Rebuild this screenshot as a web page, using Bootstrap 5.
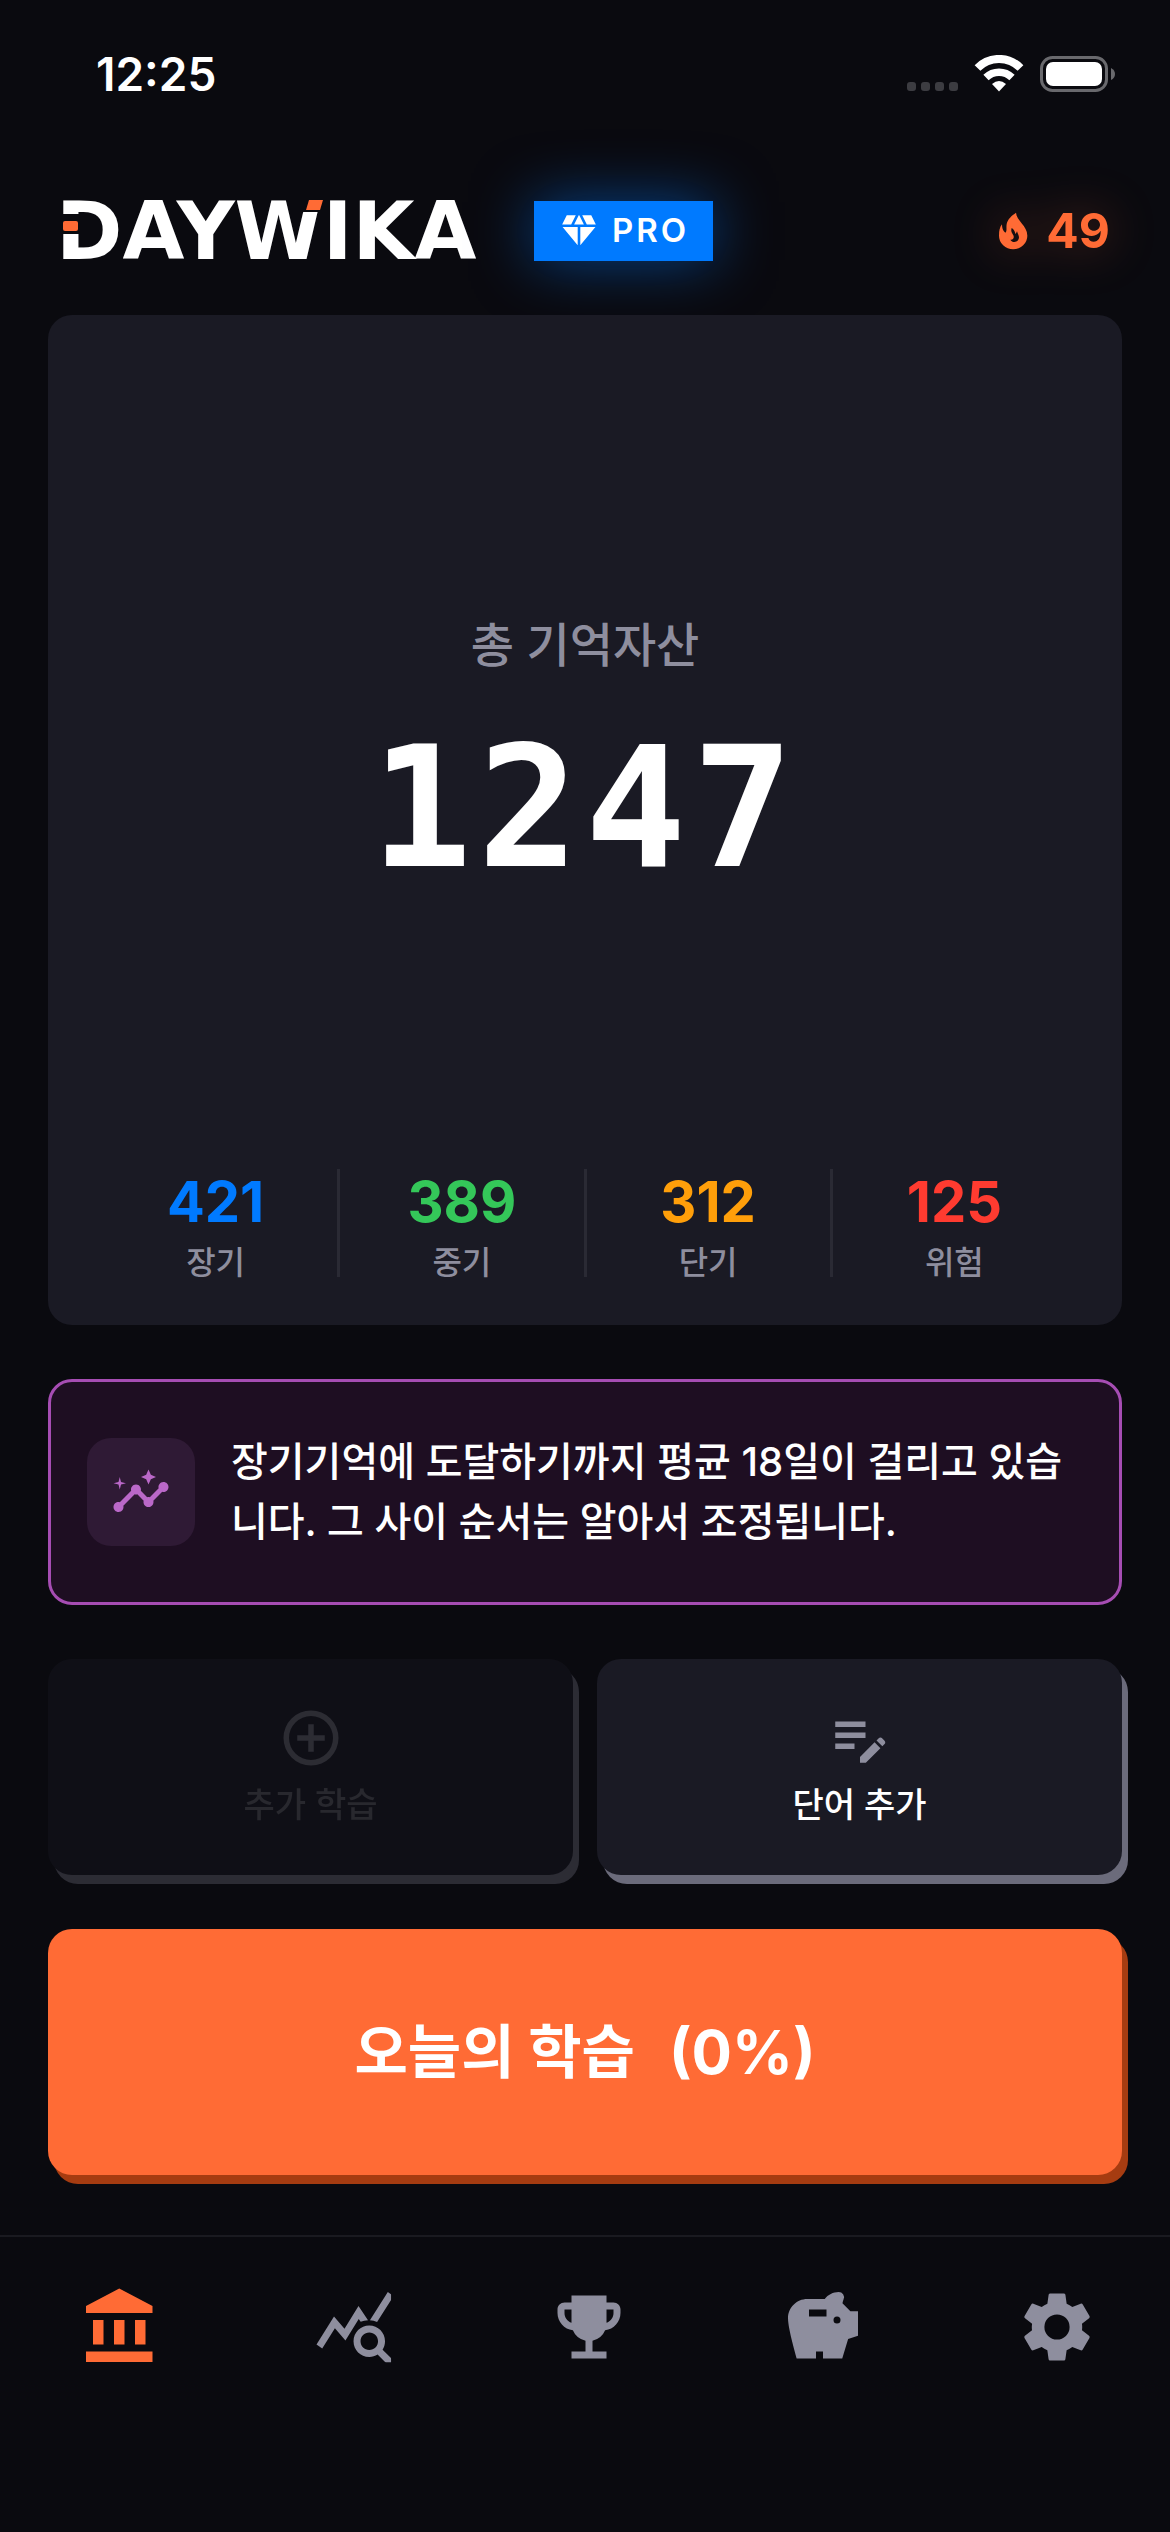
<!DOCTYPE html>
<html lang="ko">
<head>
<meta charset="utf-8">
<meta name="viewport" content="width=device-width, initial-scale=1">
<title>DAYWIKA</title>
<link href="https://cdn.jsdelivr.net/npm/bootstrap@5.3.0/dist/css/bootstrap.min.css" rel="stylesheet">
<style>
:root{--ink:#0a0a0f;--panel:#1a1a24;--muted:#8e8e9e;--flame:#ff6b35}
body{background:var(--ink);color:#fff;font-family:Inter,"Noto Sans CJK KR",sans-serif}
svg{display:block;fill:currentColor}
.status-bar{height:144px;padding:46px 54px 0 96px;font-size:46px;line-height:56px;font-weight:600}
.status-icons{margin-top:9px}
.top-bar{height:174px;padding:0 60px 0 54px}
.content{padding:0 48px;margin-top:-3px}
.wordmark{width:466px;height:120px;overflow:visible}
.wordmark text{font-family:"DejaVu Sans",sans-serif;font-weight:700;font-size:80px;fill:#fff}
.pro-tag{background:#007aff;height:60px;padding:0 24px;gap:12px;font-size:33px;font-weight:600;letter-spacing:3px;box-shadow:0 0 60px rgba(0,122,255,.5);margin-left:14px}
.streak{color:var(--flame);gap:12px;font-size:48px;line-height:60px;font-weight:700;filter:drop-shadow(0 0 24px rgba(255,107,53,.35))}
.panel{background:var(--panel);border-radius:24px;padding:48px 46px}
.panel-main{padding-bottom:10px}
.panel-title{color:var(--muted);font-size:47px;line-height:60px;font-weight:500;margin-bottom:34px}
.total{font-family:"DejaVu Sans Mono",monospace;font-weight:700;font-size:168px;line-height:198px;letter-spacing:6px}
.stat{height:108px}
.stat+.stat{border-left:3px solid #2a2a34}
.stat-num{font-size:56px;line-height:66px;font-weight:700}
.stat-label{font-size:32px;line-height:56px;font-weight:500;color:var(--muted)}
.long{color:#007aff}.mid{color:#34c759}.short{color:#ff9f0a}.risk{color:#ff3b30}
.insight{margin-top:54px;border:3px solid #a64db3;background:#1e0e22;border-radius:24px;padding:50px 36px;gap:36px}
.insight-icon{width:108px;height:108px;border-radius:24px;background:#2f1a35;color:#ba68c8}
.insight-text{font-size:40px;line-height:60px;font-weight:500}
.tiles{margin-top:54px;gap:24px}
.tile{flex:1 1 0;height:216px;gap:10px;border:0;border-radius:24px;background:var(--panel);color:#fff;font-size:34px;line-height:48px;font-weight:500;box-shadow:6px 9px 0 #6b6b7b}
.tile svg{color:var(--muted)}
.tile:disabled{opacity:.35;color:#606069}
.tile:disabled svg{color:#6b6b78}
.cta{margin-top:54px;height:246px;border:0;border-radius:24px;background:var(--flame);color:#fff;font-size:58px;line-height:72px;font-weight:700;gap:34px;box-shadow:6px 9px 0 #a63c11}
.cta-rate{font-size:60px}
.tab-bar{margin-top:60px;border-top:2px solid #1a1a20;padding:48px 0 163px}
.tab-link{flex:1 1 0;color:var(--muted);padding-left:8px}
.tab-link.active{color:var(--flame)}
</style>
</head>
<body class="min-vh-100 d-flex flex-column">
<div class="status-bar d-flex justify-content-between align-items-start">
  <span>12:25</span>
  <svg class="status-icons" width="210" height="40" viewBox="0 0 210 40" role="img" aria-label="Wi-Fi, battery">
    <g fill="#3c3c41"><rect x="1" y="27" width="9" height="9" rx="3"/><rect x="15" y="27" width="9" height="9" rx="3"/><rect x="29" y="27" width="9" height="9" rx="3"/><rect x="43" y="27" width="9" height="9" rx="3"/></g>
    <g fill="none" stroke="#fff" stroke-width="8"><path d="M71.500 13a30 30 0 0 1 43 0"/><path d="M80 22.500a18.500 18.500 0 0 1 26 0" stroke-width="7.500"/></g>
    <path d="M93 36.500 86 29q7-6 14 0z"/>
    <rect x="135.500" y="2.500" width="65" height="33" rx="11" fill="none" stroke="#69696d" stroke-width="3"/>
    <rect x="140" y="7" width="56" height="24" rx="7"/><path d="M205 13q4 2 4 6t-4 6z" fill="#69696d"/>
  </svg>
</div>
<header class="top-bar d-flex align-items-center">
  <svg class="wordmark" viewBox="-6 0 466 120" role="img" aria-label="DAYWIKA">
    <text x="-4" y="88">DAYWIKA</text>
    <path d="M0 43h19v20H0z" fill="#0a0a0f"/><rect x="3" y="50" width="15" height="10" rx="2" fill="#ff6b35"/>
    <path d="M243 27h22v14h-22z" fill="#0a0a0f"/><path d="M249 29h14l-3 10h-14z" fill="#ff6b35"/>
  </svg>
  <span class="pro-tag d-flex align-items-center">
    <svg width="42" height="42" viewBox="0 0 24 24"><path d="M12.160 3h-.320L9.210 8.250h5.580zM16.460 8.250h5.160L19 3h-5.160zM21.380 9.750h-8.630V20.100zM11.250 20.100V9.750H2.620zM7.540 8.250 10.160 3H5L2.380 8.250z"/></svg>PRO
  </span>
  <span class="streak d-flex align-items-center ms-auto">
    <svg width="42" height="42" viewBox="21 30 126 126"><path fill-rule="evenodd" d="M93 38C94 62 127 76 127 107A42 40 0 0 1 42 107C42 92 44 82 51 73C51 84 53 92 61 98C67 93 63 84 65 72C68 57 80 47 93 38zM80 84C76 96 83 100 86 108C88 116 82 120 76 119C81 128 93 128 99 121C106 111 99 105 96 94C94 99 93 101 91 102C90 94 86 88 80 84z"/></svg>49
  </span>
</header>
<main class="content d-flex flex-column flex-grow-1">
  <section class="panel d-flex flex-column flex-grow-1 text-center">
    <div class="panel-main flex-grow-1 d-flex flex-column justify-content-center">
      <div class="panel-title">총 기억자산</div>
      <div class="total">1247</div>
    </div>
    <div class="row g-0">
      <div class="col stat"><div class="stat-num long">421</div><div class="stat-label">장기</div></div>
      <div class="col stat"><div class="stat-num mid">389</div><div class="stat-label">중기</div></div>
      <div class="col stat"><div class="stat-num short">312</div><div class="stat-label">단기</div></div>
      <div class="col stat"><div class="stat-num risk">125</div><div class="stat-label">위험</div></div>
    </div>
  </section>
  <section class="insight d-flex align-items-center">
    <div class="insight-icon d-flex align-items-center justify-content-center flex-shrink-0">
      <svg width="60" height="60" viewBox="0 0 24 24"><path d="M21 8c-1.450 0-2.260 1.440-1.930 2.510l-3.550 3.560c-.3-.09-.74-.09-1.040 0l-2.550-2.550C12.270 10.450 11.460 9 10 9c-1.450 0-2.270 1.440-1.930 2.520l-4.560 4.550C2.440 15.740 1 16.550 1 18c0 1.100.9 2 2 2 1.450 0 2.260-1.440 1.930-2.510l4.550-4.560c.3.090.74.090 1.040 0l2.550 2.550C12.730 16.550 13.540 18 15 18c1.450 0 2.270-1.440 1.930-2.520l3.560-3.550c1.070.33 2.510-.48 2.510-1.930 0-1.100-.9-2-2-2zM15 9l.94-2.070L18 6l-2.060-.93L15 3l-.92 2.070L12 6l2.080.93zM3.500 11 4 9l2-.5L4 8l-.5-2L3 8l-2 .5L3 9z"/></svg>
    </div>
    <p class="insight-text mb-0">장기기억에 도달하기까지 평균 18일이 걸리고 있습니다. 그 사이 순서는 알아서 조정됩니다.</p>
  </section>
  <div class="tiles d-flex">
    <button type="button" class="tile d-flex flex-column align-items-center justify-content-center" disabled>
      <svg width="66" height="66" viewBox="0 0 24 24"><path d="M13 7h-2v4H7v2h4v4h2v-4h4v-2h-4zM12 2a10 10 0 1 0 0 20 10 10 0 0 0 0-20zm0 18a8 8 0 1 1 0-16 8 8 0 0 1 0 16z"/></svg>추가 학습
    </button>
    <button type="button" class="tile d-flex flex-column align-items-center justify-content-center">
      <svg width="66" height="66" viewBox="0 0 24 24"><path d="M3 10h11v2H3zM3 8h11V6H3zM3 16h7v-2H3zM18.010 12.870l.71-.71a1 1 0 0 1 1.410 0l.71.71a1 1 0 0 1 0 1.410l-.71.71zM17.300 13.580l-5.300 5.300V21h2.120l5.300-5.300z"/></svg>단어 추가
    </button>
  </div>
  <button type="button" class="cta d-flex align-items-center justify-content-center"><span>오늘의 학습</span><span class="cta-rate">(0%)</span></button>
</main>
<nav class="tab-bar d-flex" aria-label="메뉴">
  <a href="#" class="tab-link active d-flex justify-content-center" aria-label="자산"><svg width="84" height="84" viewBox="0 0 24 24"><path d="M4 10v7h3v-7zM10 10v7h3v-7zM2 22h19v-3H2zM16 10v7h3v-7zM11.500 1 2 6v2h19V6z"/></svg></a>
  <a href="#" class="tab-link d-flex justify-content-center" aria-label="통계"><svg width="84" height="84" viewBox="0 0 24 24"><clipPath id="edge"><path d="M0 0h22.300v22.100H0z"/></clipPath><path clip-path="url(#edge)" d="M19.880 18.470c.44-.7.7-1.510.7-2.390 0-2.490-2.010-4.500-4.500-4.500s-4.500 2.010-4.500 4.500 2.010 4.500 4.490 4.500c.88 0 1.700-.26 2.390-.7L21.580 23 23 21.580zm-3.800.11c-1.380 0-2.500-1.120-2.500-2.500s1.120-2.500 2.500-2.500 2.500 1.120 2.500 2.500-1.120 2.500-2.500 2.500zm-.36-8.500c-.74.02-1.450.18-2.100.45l-.55-.83-3.800 6.180-3.010-3.520-3.630 5.810L1 17l5-8 3 3.500L13 6zm2.590.5c-.64-.28-1.330-.45-2.050-.49L21.380 2 23 3.180z"/></svg></a>
  <a href="#" class="tab-link d-flex justify-content-center" aria-label="업적"><svg width="84" height="84" viewBox="0 0 24 24"><path d="M19 5h-2V3H7v2H5c-1.100 0-2 .9-2 2v1c0 2.550 1.920 4.630 4.390 4.940A5.010 5.010 0 0 0 11 15.900V19H7v2h10v-2h-4v-3.100a5.010 5.010 0 0 0 3.610-2.960C19.080 12.630 21 10.550 21 8V7c0-1.100-.9-2-2-2zM5 8V7h2v3.820C5.840 10.400 5 9.300 5 8zm14 0c0 1.300-.84 2.400-2 2.820V7h2z"/></svg></a>
  <a href="#" class="tab-link d-flex justify-content-center" aria-label="저금통"><svg width="84" height="84" viewBox="0 0 24 24"><path d="M19.830 7.500 17.560 5.230c.07-.42.180-.81.320-1.150A1.498 1.498 0 0 0 16.500 2c-1.640 0-3.090.79-4 2h-5C4.460 4 2 6.460 2 9.500S4.500 21 4.500 21H10v-2h2v2h5.500l1.680-5.590 2.820-.94V7.500zM13 9H8V7h5zm3 2a1 1 0 1 1 0-2 1 1 0 0 1 0 2z"/></svg></a>
  <a href="#" class="tab-link d-flex justify-content-center" aria-label="설정"><svg width="84" height="84" viewBox="0 0 24 24"><path d="M19.140 12.940c.04-.3.060-.61.060-.94 0-.32-.02-.64-.07-.94l2.030-1.580c.18-.14.230-.41.120-.61l-1.920-3.320c-.12-.22-.37-.29-.59-.22l-2.390.96c-.5-.38-1.030-.7-1.620-.94l-.36-2.540c-.04-.24-.24-.41-.48-.41h-3.840c-.24 0-.43.17-.47.41l-.36 2.540c-.59.24-1.130.57-1.620.94l-2.390-.96c-.22-.08-.47 0-.59.22L2.740 8.870c-.12.21-.08.47.120.61l2.030 1.580c-.05.3-.09.63-.09.94s.02.64.070.94l-2.030 1.580c-.18.14-.23.41-.12.61l1.920 3.320c.12.22.37.29.590.22l2.390-.96c.5.38 1.030.7 1.620.94l.36 2.540c.05.24.24.41.480.41h3.840c.24 0 .44-.17.470-.41l.36-2.540c.59-.24 1.130-.56 1.620-.94l2.390.96c.22.08.47 0 .59-.22l1.920-3.320c.12-.22.07-.47-.12-.61zM12 15.600a3.600 3.600 0 1 1 0-7.200 3.600 3.600 0 0 1 0 7.200z"/></svg></a>
</nav>
<script src="https://cdn.jsdelivr.net/npm/bootstrap@5.3.0/dist/js/bootstrap.bundle.min.js"></script>
</body>
</html>
